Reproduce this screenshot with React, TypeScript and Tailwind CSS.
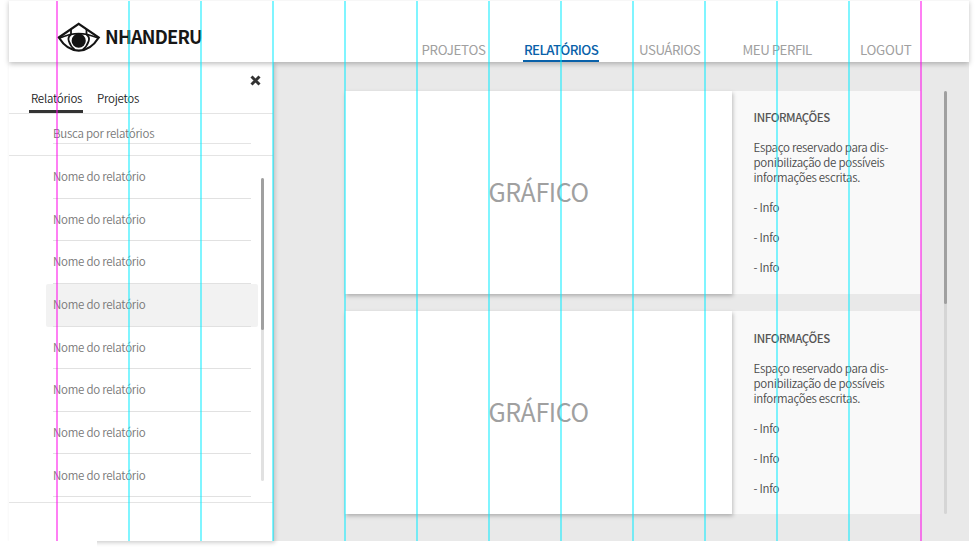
const reports = Array.from({ length: 8 }, (_, i) => ({ id: i, active: i === 3 }));

const guides = Array.from({ length: 13 }, (_, i) => i === 0 || i === 12);

function Logo() {
  return (
    <svg className="h-[32px] w-[44px]" viewBox="0 0 44 32" fill="none" stroke="#141414" strokeWidth="2.2">
      <path d="M1.800 17.500 L21.700 3.800 L41.800 17.500 Q33.500 30.600 21.800 30.600 Q10 30.600 1.800 17.500Z" />
      <path d="M2 18.300 Q7.500 16 13 14.500 Q21.700 12.800 30.500 14.500 Q36 16 42 18.300" strokeWidth="1.700" />
      <path d="M14 9 V14.500 Q10.500 17 11.800 21 Q13.500 26.500 18 30" strokeWidth="1.800" />
      <path d="M29.500 9 V14.500 Q33 17 31.700 21 Q30 26.500 25.500 30" strokeWidth="1.800" />
      <circle cx="21.700" cy="20.700" r="7.100" fill="#141414" stroke="none" />
    </svg>
  );
}

function NavItem({ label, className }: { label: string; className: string }) {
  return <a className={"block whitespace-nowrap text-[13.3px] leading-[22px] " + className}>{label}</a>;
}

function ReportCard({ infoPadding }: { infoPadding: string }) {
  return (
    <section className="flex h-[203px]">
      <div className="z-[1] flex w-[387px] items-center justify-center bg-white pb-[2px] text-[25px] tracking-[-0.4px] text-[#a0a0a0] shadow-[1px_2px_4px_rgba(0,0,0,0.25)]">
        <span>GRÁFICO</span>
      </div>
      <div className={"w-[189px] bg-[#f9f9f9] pl-[21.5px] text-[11.5px] leading-[15px] font-[350] tracking-[-0.27px] text-[#4a4a4a] " + infoPadding}>
        <h2 className="font-medium tracking-[-0.4px] text-[#555]">
          <span>INFORMAÇÕES</span>
        </h2>
        <p className="mt-[15px] whitespace-nowrap">
          <span>Espaço reservado para dis-</span>
          <br />
          <span>ponibilização de possíveis</span>
          <br />
          <span>informações escritas.</span>
        </p>
        <ul className="mt-[15px] flex flex-col gap-[15px]">
          <li>- Info</li>
          <li>- Info</li>
          <li>- Info</li>
        </ul>
      </div>
    </section>
  );
}

export default function App() {
  return (
    <div className="relative h-[550px] w-[978px] overflow-hidden bg-white pl-[9px] font-['Noto_Sans_CJK_SC',sans-serif]">
      <div className="flex h-[541px] w-[960px] flex-col bg-[#e9e9e9]">
        <header className="z-10 flex h-[62px] shrink-0 border-t border-[#f7f7f7] bg-white shadow-[0_2px_5px_rgba(0,0,0,0.25)]">
          <div className="flex w-[412px] pt-[19px] pl-[48px]">
            <Logo />
            <h1 className="ml-[4px] text-[18.3px] leading-[33px] font-bold tracking-[-0.8px] text-[#171717]">
              <span>NHANDERU</span>
            </h1>
          </div>
          <nav className="flex pt-[38px] tracking-[-0.3px] text-[#a0a0a0]">
            <NavItem label="PROJETOS" className="w-[102px] pl-[0.5px]" />
            <NavItem label="RELATÓRIOS" className="mr-[40px] h-[23px] w-[76px] border-b-2 border-[#0961a9] pl-px font-medium tracking-[-0.6px] text-[#0961a9]" />
            <NavItem label="USUÁRIOS" className="w-[103.5px] tracking-[-0.45px]" />
            <NavItem label="MEU PERFIL" className="w-[117.5px] tracking-[-0.5px]" />
            <NavItem label="LOGOUT" className="w-[60px]" />
          </nav>
        </header>
        <div className="flex min-h-0 flex-1">
          <aside className="flex w-[264px] flex-col bg-white text-[11.5px] font-[350] tracking-[-0.24px] shadow-[2px_2px_4px_rgba(0,0,0,0.18)]">
            <div className="flex h-[25px] justify-end pt-[13px] pr-[12px]">
              <svg className="h-[11px] w-[11px]" viewBox="0 0 11 11" stroke="#333" strokeWidth="3">
                <path d="M1.500 1.500 L9.500 9.500 M9.500 1.500 L1.500 9.500" />
              </svg>
            </div>
            <div className="flex h-[27px] gap-[14px] border-b border-[#e4e4e4] pl-[20px] leading-[22px] text-[#222]">
              <div className="h-[26px] w-[54px] border-b-[3px] border-[#333] pl-[2px]">Relatórios</div>
              <div>Projetos</div>
            </div>
            <div className="h-[42px] border-b border-[#e4e4e4] px-[22px] pl-[44px]">
              <div className="h-[30px] border-b border-[#e4e4e4] pt-[9px] leading-[20px] text-[#777]">Busca por relatórios</div>
            </div>
            <div className="flex h-[347px] border-b border-[#e4e4e4] pl-[37px]">
              <ul className="grid h-[341px] w-[212px] grid-rows-8">
                {reports.map((r) => (
                  <li key={r.id} className={r.active ? "rounded-[2px] bg-[#f2f2f2] px-[7px]" : "px-[7px]"}>
                    <div className="flex h-full items-center border-b border-[#e1e1e1] text-[#777]">Nome do relatório</div>
                  </li>
                ))}
              </ul>
              <div className="mt-[22px] ml-[2.5px] h-[303px] w-[3px] rounded-full bg-[#e1e1e1]">
                <div className="h-[152px] rounded-full bg-[#a0a0a0]" />
              </div>
            </div>
          </aside>
          <main className="flex pt-[29px] pl-[72px]">
            <div className="flex flex-col gap-[17px]">
              <ReportCard infoPadding="pt-[19px]" />
              <ReportCard infoPadding="pt-[20px]" />
            </div>
            <div className="ml-[22.5px] h-[423px] w-[3px] rounded-full bg-[#d5d5d5]">
              <div className="h-[213px] rounded-full bg-[#a0a0a0]" />
            </div>
          </main>
        </div>
      </div>
      <div className="relative -ml-[9px] h-[9px] w-[97px] bg-white" />
      <div className="pointer-events-none absolute top-px left-[56px] z-20 flex h-[540px] gap-[70px]">
        {guides.map((edge, i) => (
          <div key={i} className={edge ? "w-[2px] bg-[#ff00ea]/50" : "w-[2px] bg-[#00ecff]/50"} />
        ))}
      </div>
    </div>
  );
}
